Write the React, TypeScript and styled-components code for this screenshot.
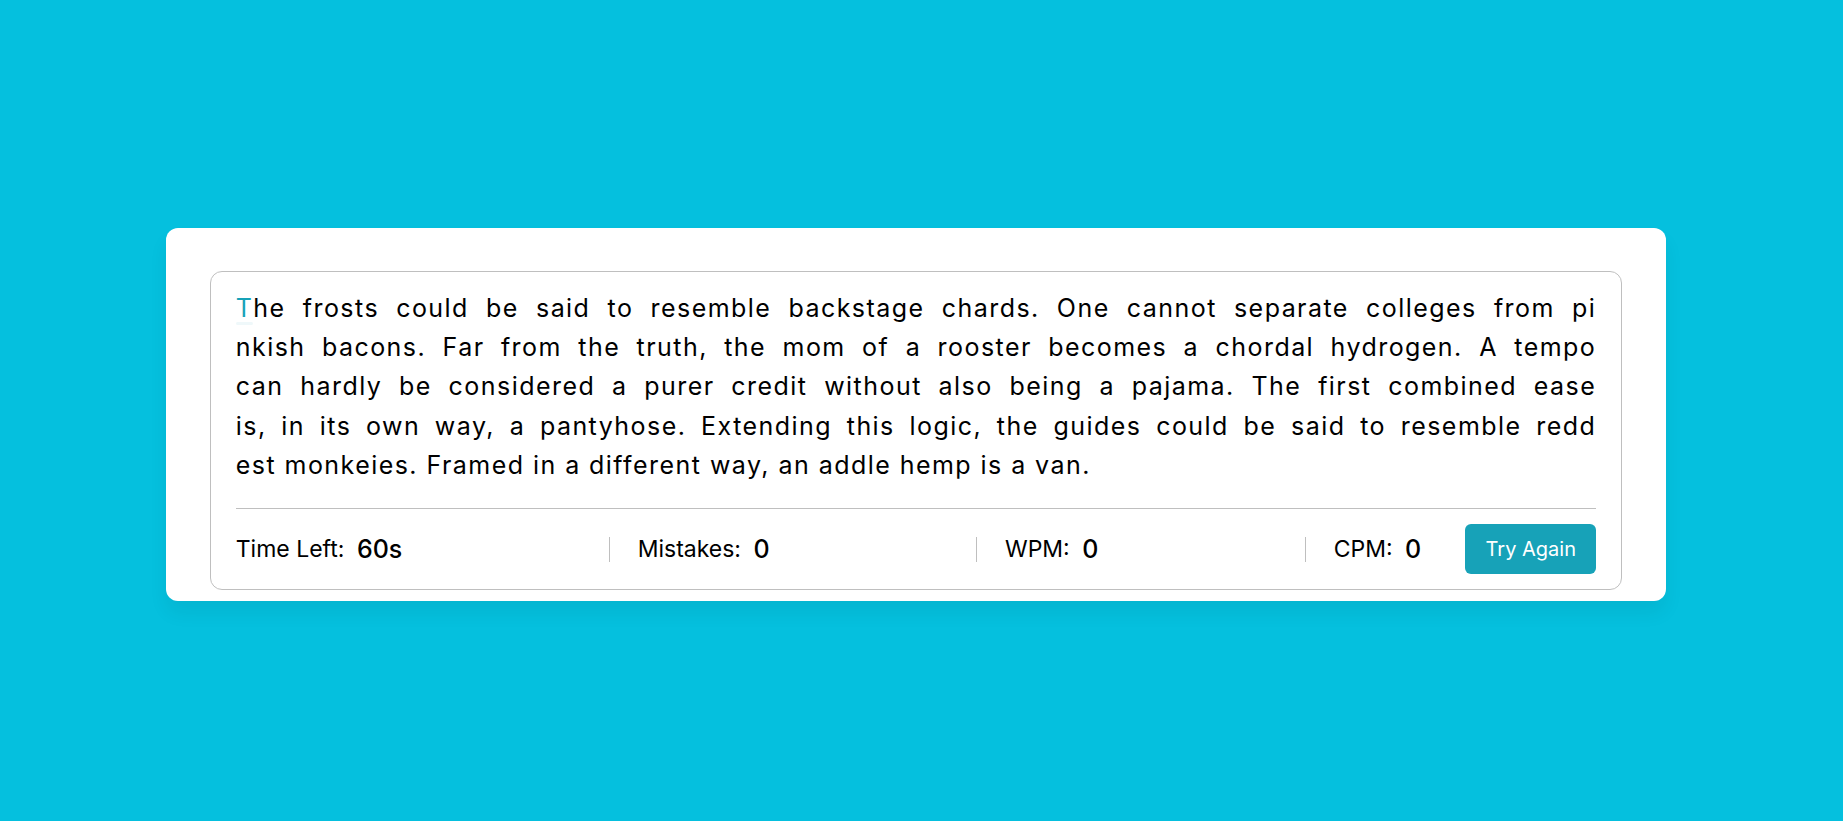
import React from "react";
import styled, { createGlobalStyle } from "styled-components";

const GlobalStyle = createGlobalStyle`
  *, *::before, *::after { margin: 0; padding: 0; box-sizing: border-box; }
  html, body { background: #05c0de; }
  body {
    font-family: "Inter", "Liberation Sans", sans-serif;
    color: #000;
  }
`;

const Page = styled.main`
  min-height: 100vh;
  display: flex;
  align-items: center;
  justify-content: center;
  padding: 8px 11px 0 0;
`;

const Card = styled.section`
  width: 1500px;
  padding: 43.75px 43.75px 11.25px;
  background: #fff;
  border-radius: 12px;
  box-shadow: 0 12px 19px rgba(0, 0, 0, 0.06);
`;

const ContentBox = styled.div`
  border: 1px solid #bfbfbf;
  border-radius: 12px;
  padding: 16.25px 25px 0;
`;

const Passage = styled.div`
  font-size: 25px;
  line-height: 39.4px;
  letter-spacing: 1.45px;
  color: #000;
`;

const Line = styled.div<{ $last?: boolean }>`
  text-align: ${(p) => (p.$last ? "left" : "justify")};
  text-align-last: ${(p) => (p.$last ? "left" : "justify")};
`;

const ActiveChar = styled.span`
  position: relative;
  color: #17a2b8;
  &::before {
    content: "";
    position: absolute;
    left: 0;
    bottom: -2px;
    width: 100%;
    height: 2.5px;
    border-radius: 5px;
    background: #17a2b8;
    opacity: 0.07;
  }
`;

const Footer = styled.div`
  margin-top: 22.5px;
  border-top: 1px solid #bfbfbf;
  padding: 15px 0;
  display: flex;
  align-items: center;
  justify-content: space-between;
`;

const StatsList = styled.ul`
  width: calc(100% - 175px);
  display: flex;
  align-items: center;
  justify-content: space-between;
`;

const StatItem = styled.li`
  list-style: none;
  display: flex;
  align-items: center;
  height: 25px;
  &:not(:first-child) {
    padding-left: 27.5px;
    border-left: 1px solid #bfbfbf;
  }
`;

const Label = styled.p`
  font-size: 23px;
  font-weight: 400;
`;

const Value = styled.span`
  display: block;
  font-size: 25px;
  font-weight: 500;
  margin-left: 12.5px;
`;

const Button = styled.button`
  width: 131px;
  height: 50px;
  border: none;
  outline: none;
  border-radius: 6px;
  background: #17a2b8;
  color: #fff;
  font-family: inherit;
  font-size: 20px;
  cursor: pointer;
`;

const lines = [
  "The frosts could be said to resemble backstage chards. One cannot separate colleges from pi",
  "nkish bacons. Far from the truth, the mom of a rooster becomes a chordal hydrogen. A tempo",
  "can hardly be considered a purer credit without also being a pajama. The first combined ease",
  "is, in its own way, a pantyhose. Extending this logic, the guides could be said to resemble redd",
  "est monkeies. Framed in a different way, an addle hemp is a van.",
];

const stats = [
  { label: "Time Left:", value: "60s" },
  { label: "Mistakes:", value: "0" },
  { label: "WPM:", value: "0" },
  { label: "CPM:", value: "0" },
];

export default function App() {
  return (
    <>
      <GlobalStyle />
      <Page>
        <Card>
          <ContentBox>
            <Passage>
              {lines.map((line, i) => (
                <Line key={i} $last={i === lines.length - 1}>
                  {i === 0 ? (
                    <>
                      <ActiveChar>{line[0]}</ActiveChar>
                      {line.slice(1)}
                    </>
                  ) : (
                    line
                  )}
                </Line>
              ))}
            </Passage>
            <Footer>
              <StatsList>
                {stats.map((s) => (
                  <StatItem key={s.label}>
                    <Label>{s.label}</Label>
                    <Value>{s.value}</Value>
                  </StatItem>
                ))}
              </StatsList>
              <Button>Try Again</Button>
            </Footer>
          </ContentBox>
        </Card>
      </Page>
    </>
  );
}
